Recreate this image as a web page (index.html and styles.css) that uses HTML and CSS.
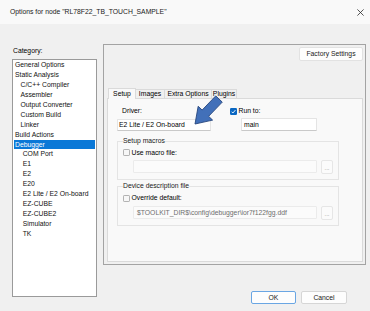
FILE: index.html
```html
<!DOCTYPE html>
<html>
<head>
<meta charset="utf-8">
<title>Options for node</title>
<link rel="stylesheet" href="styles.css">
</head>
<body>
<div class="dialog">
  <div class="titlebar">
    <span class="title">Options for node "RL78F22_TB_TOUCH_SAMPLE"</span>
    <svg class="close" width="7" height="7" viewBox="0 0 7 7"><path d="M0.4 0.4L6.6 6.6M6.6 0.4L0.4 6.6" stroke="#2b2b2b" stroke-width="0.8" fill="none"/></svg>
  </div>
  <div class="content">
    <div class="left">
      <div class="cat-label">Category:</div>
      <ul class="cat-list">
        <li>General Options</li>
        <li>Static Analysis</li>
        <li class="l2">C/C++ Compiler</li>
        <li class="l2">Assembler</li>
        <li class="l2">Output Converter</li>
        <li class="l2">Custom Build</li>
        <li class="l2">Linker</li>
        <li>Build Actions</li>
        <li class="sel">Debugger</li>
        <li class="l3">COM Port</li>
        <li class="l3">E1</li>
        <li class="l3">E2</li>
        <li class="l3">E20</li>
        <li class="l3">E2 Lite / E2 On-board</li>
        <li class="l3">EZ-CUBE</li>
        <li class="l3">EZ-CUBE2</li>
        <li class="l3">Simulator</li>
        <li class="l3">TK</li>
      </ul>
    </div>
    <div class="right">
      <div class="panel">
        <div class="panel-top"><span class="btn factory">Factory Settings</span></div>
        <div class="tabs">
          <span class="tab active w-setup">Setup</span>
          <span class="tab w-images">Images</span>
          <span class="tab w-extra">Extra Options</span>
          <span class="tab w-plugins">Plugins</span>
        </div>
        <div class="pane">
          <div class="row1">
            <div class="col-driver">
              <div class="driver-lbl">Driver:</div>
              <div class="field driver">E2 Lite / E2 On-board</div>
            </div>
            <div class="col-run">
              <div class="chk-row">
                <svg class="chk" viewBox="0 0 7 7"><rect x="0" y="0" width="7" height="7" rx="1.2" fill="#0a67c2"/><path d="M1.6 3.7L2.9 5L5.4 2.1" stroke="#fff" stroke-width="0.9" fill="none"/></svg>
                <span>Run to:</span>
              </div>
              <div class="field main">main</div>
            </div>
          </div>
          <fieldset class="group g1">
            <legend>Setup macros</legend>
            <div class="chk-row">
              <svg class="chk" viewBox="0 0 7 7"><rect x="0.4" y="0.4" width="6.2" height="6.2" rx="1.2" fill="#f7f7f7" stroke="#8a8a8a" stroke-width="0.7"/></svg>
              <span>Use macro file:</span>
            </div>
            <div class="file-row">
              <div class="field dis"></div>
              <span class="btn dots">...</span>
            </div>
          </fieldset>
          <fieldset class="group g2">
            <legend>Device description file</legend>
            <div class="chk-row">
              <svg class="chk" viewBox="0 0 7 7"><rect x="0.4" y="0.4" width="6.2" height="6.2" rx="1.2" fill="#f7f7f7" stroke="#8a8a8a" stroke-width="0.7"/></svg>
              <span>Override default:</span>
            </div>
            <div class="file-row">
              <div class="field dis path">$TOOLKIT_DIR$\config\debugger\ior7f122fgg.ddf</div>
              <span class="btn dots">...</span>
            </div>
          </fieldset>
        </div>
      </div>
      <div class="footer">
        <span class="btn ok">OK</span>
        <span class="btn cancel">Cancel</span>
      </div>
    </div>
  </div>
  <svg class="arrow" width="40" height="40" viewBox="0 0 40 40">
    <polygon points="34.25,10.12 20.64,24.3 24.6,28.11 7,32 10.18,14.25 14.14,18.06 27.75,3.88" fill="#4270b9" stroke="#27467d" stroke-width="0.9" stroke-linejoin="miter"/>
  </svg>
</div>
</body>
</html>
```

FILE: styles.css
```css
* {
  box-sizing: border-box;
  margin: 0;
  padding: 0;
}

html, body {
  width: 370px;
  height: 311px;
  overflow: hidden;
}

body {
  background: #f0f0f0;
  font-family: "Liberation Sans", Arial, sans-serif;
  font-size: 6.8px;
  line-height: 8px;
  color: #000;
}

.dialog {
  position: relative;
  width: 370px;
  height: 311px;
}

.titlebar {
  height: 24px;
  display: flex;
  align-items: center;
  justify-content: space-between;
  padding: 0 6px 0 10px;
  background: #f9f9f9;
}

.title {
  color: #1a1a1a;
  white-space: nowrap;
}

.close {
  display: block;
}

.content {
  display: flex;
  gap: 6px;
  padding: 20px 4px 0 12px;
}

.left {
  width: 85px;
  padding-top: 3px;
}

.cat-label {
  height: 8px;
  padding-left: 1px;
}

.cat-list {
  list-style: none;
  margin-top: 4px;
  height: 238px;
  border: 1px solid #9a9a9a;
  background: #fff;
  padding: 0 1px;
}

.cat-list li {
  height: 9.95px;
  line-height: 9.95px;
  padding-left: 1px;
  white-space: nowrap;
  color: #111;
}

.cat-list li.l2 {
  padding-left: 6.5px;
}

.cat-list li.l3 {
  padding-left: 8.7px;
}

.cat-list li.sel {
  background: #0a78d7;
  color: #fff;
}

.right {
  width: 263px;
}

.panel {
  height: 221px;
  border: 1px solid #a3a3a3;
  padding: 2px 2px 2px 3px;
  display: flex;
  flex-direction: column;
}

.panel-top {
  display: flex;
  justify-content: flex-end;
}

.btn {
  display: flex;
  align-items: center;
  justify-content: center;
  background: #fdfdfd;
  border: 1px solid #d6d6d6;
  border-radius: 2px;
  color: #1a1a1a;
  white-space: nowrap;
}

.factory {
  width: 64px;
  height: 14px;
  border-color: #e2e2e2;
}

.tabs {
  margin-top: 27px;
  height: 10px;
  display: flex;
  align-items: flex-end;
  padding-left: 1px;
}

.tab {
  height: 9px;
  line-height: 8px;
  text-align: center;
  border: 1px solid #dadada;
  border-bottom: none;
  background: #f0f0f0;
  margin-right: -1px;
  white-space: nowrap;
}

.tab.active {
  height: 11px;
  margin-bottom: -1px;
  background: #f9f9f9;
  position: relative;
  z-index: 1;
  line-height: 9px;
}

.w-setup { width: 28px; }
.w-images { width: 30px; }
.w-extra { width: 48px; }
.w-plugins { width: 26px; }

.pane {
  flex: 1;
  border: 1px solid #dadada;
  background: #f9f9f9;
  padding: 8px 0 0 9px;
}

.row1 {
  display: flex;
}

.col-driver {
  width: 94px;
}

.driver-lbl {
  height: 8px;
  padding-left: 5px;
}

.field {
  background: #fff;
  border: 1px solid #e4e4e4;
  border-bottom-color: #c9c9c9;
  border-radius: 1px;
  white-space: nowrap;
  overflow: hidden;
}

.driver {
  margin-top: 4px;
  height: 12px;
  line-height: 10px;
  padding-left: 1px;
}

.col-run {
  margin-left: 19px;
}

.chk-row {
  display: flex;
  align-items: center;
  gap: 1.5px;
  height: 8px;
}

.chk {
  width: 7px;
  height: 7px;
  display: block;
  flex: none;
}

.main {
  margin-top: 3px;
  margin-left: 11px;
  width: 76px;
  height: 13px;
  line-height: 11px;
  padding-left: 2px;
}

.group {
  width: 222px;
  border: 1px solid #e4e4e4;
  padding: 0 0 5px 5px;
  min-width: 0;
}

.group legend {
  padding: 0;
  height: 8px;
  line-height: 8px;
  color: #1a1a1a;
}

.g1 {
  margin-top: 6px;
}

.g1 .chk-row {
  margin-top: 3.5px;
}

.g1 .file-row {
  margin-top: 3.5px;
}

.g2 {
  margin-top: 2px;
}

.g2 .chk-row {
  margin-top: 4.3px;
}

.g2 .file-row {
  margin-top: 3.7px;
}

.file-row {
  display: flex;
  align-items: flex-start;
}

.field.dis {
  margin-left: 10px;
  width: 184px;
  height: 13px;
  background: #fbfbfb;
  border-color: #ebebeb;
  color: #6e6e6e;
  line-height: 11px;
  padding-left: 3px;
}

.dots {
  margin-left: 4px;
  width: 12px;
  height: 14px;
  border-color: #e6e6e6;
  background: #fbfbfb;
  color: #8a8a8a;
  font-size: 6px;
  line-height: 6px;
  padding-top: 2px;
}

.footer {
  margin-top: 26px;
  display: flex;
  justify-content: flex-end;
  gap: 5px;
  padding-right: 19px;
}

.ok {
  width: 45px;
  height: 13px;
  border-color: #6aa6e3;
}

.cancel {
  width: 46px;
  height: 13px;
}

.arrow {
  position: absolute;
  left: 188px;
  top: 92px;
  display: block;
}
```
